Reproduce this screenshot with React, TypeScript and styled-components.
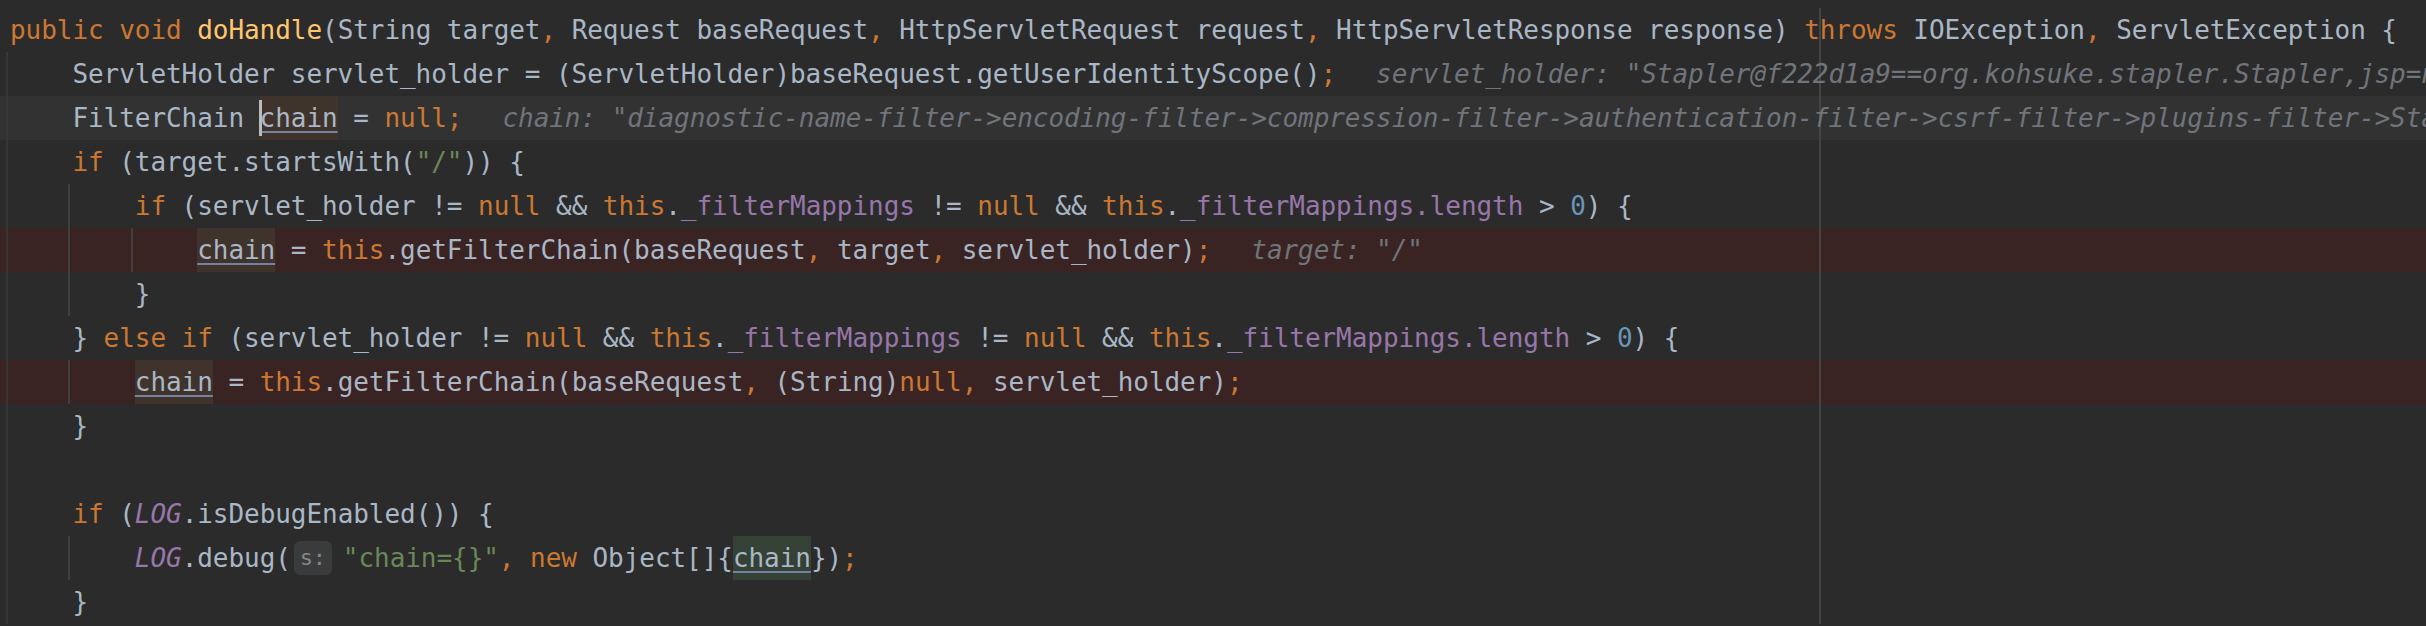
import React from "react";
import styled, { createGlobalStyle } from "styled-components";

const CHAR_W = 15.6;
const ORIGIN_X = 10;
const MARGIN_X = 1819;

const GlobalStyle = createGlobalStyle`
  html, body {
    margin: 0;
    padding: 0;
    background: #2b2b2b;
    overflow: hidden;
  }
`;

type Kind = "tx" | "kw" | "fn" | "st" | "nu" | "fi" | "sf";

const COLORS: Record<Kind, string> = {
  tx: "#a9b7c6",
  kw: "#cc7832",
  fn: "#ffc66d",
  st: "#6a8759",
  nu: "#6897bb",
  fi: "#9876aa",
  sf: "#9876aa",
};

type Part =
  | { type: "tok"; k: Kind; t: string }
  | { type: "ident"; access: "write" | "read"; t: string; caret?: boolean }
  | { type: "value"; t: string }
  | { type: "param"; t: string };

type LineData = {
  parts: Part[];
  guides: number[];
  bg?: "current" | "breakpoint";
};

const Editor = styled.div`
  width: 2426px;
  height: 626px;
  background: #2b2b2b;
  overflow: hidden;
  font-family: "DejaVu Sans Mono", "Liberation Mono", monospace;
  font-size: 26px;
  letter-spacing: -0.053px;
`;

const Code = styled.div`
  display: flex;
  flex-direction: column;
  padding-top: 8px;
`;

/* Vertical rules (indent guides and the right margin) are painted as
   background layers of each line, so they sit over the line colour. */
const rule = (x: number, color: string) => ({
  image: `linear-gradient(${color}, ${color})`,
  pos: `${x}px 0`,
});

const Line = styled.div<{ $bg?: "current" | "breakpoint"; $guides: number[] }>`
  display: flex;
  align-items: stretch;
  height: 44px;
  padding-left: ${ORIGIN_X}px;
  white-space: pre;
  line-height: 44px;
  ${(p) => {
    const rules = [
      rule(MARGIN_X, "#444444"),
      ...p.$guides.map((c) => rule(6 + c * CHAR_W, c === 0 ? "#363636" : "#3f3f3f")),
    ];
    return `
      background-color: ${
        p.$bg === "current" ? "#323232" : p.$bg === "breakpoint" ? "#3a2323" : "transparent"
      };
      background-image: ${rules.map((r) => r.image).join(", ")};
      background-position: ${rules.map((r) => r.pos).join(", ")};
      background-size: 2px 100%;
      background-repeat: no-repeat;
    `;
  }}
`;

const Tok = styled.span<{ $k: Kind }>`
  color: ${(p) => COLORS[p.$k]};
  font-style: ${(p) => (p.$k === "sf" ? "italic" : "normal")};
`;

const Ident = styled.span<{ $access: "write" | "read" }>`
  position: relative;
  color: #a9b7c6;
  background: ${(p) => (p.$access === "write" ? "#40332b" : "#344134")};
  text-decoration: underline;
  text-decoration-color: #7382a0;
  text-decoration-thickness: 2px;
  text-underline-offset: 4px;
`;

const Caret = styled.span`
  position: absolute;
  left: -1px;
  top: 4px;
  bottom: 4px;
  width: 3px;
  background: #bbbbbb;
`;

const InlineValue = styled.span`
  margin-left: 40px;
  color: #70747b;
  font-style: italic;
`;

const ParamHint = styled.span`
  align-self: center;
  display: flex;
  align-items: center;
  justify-content: center;
  width: 38px;
  height: 34px;
  margin: 0 11px 0 3px;
  border-radius: 6px;
  background: #3a3b3c;
  color: #878787;
  font-size: 22px;
  line-height: 34px;
`;

const t = (k: Kind, text: string): Part => ({ type: "tok", k, t: text });
const w = (text: string, caret = false): Part => ({ type: "ident", access: "write", t: text, caret });
const r = (text: string): Part => ({ type: "ident", access: "read", t: text });
const v = (text: string): Part => ({ type: "value", t: text });
const ph = (text: string): Part => ({ type: "param", t: text });

const condition = (lead: Part[]): Part[] => [
  ...lead,
  t("tx", " (servlet_holder != "),
  t("kw", "null"),
  t("tx", " && "),
  t("kw", "this"),
  t("tx", "."),
  t("fi", "_filterMappings"),
  t("tx", " != "),
  t("kw", "null"),
  t("tx", " && "),
  t("kw", "this"),
  t("tx", "."),
  t("fi", "_filterMappings.length"),
  t("tx", " > "),
  t("nu", "0"),
  t("tx", ") {"),
];

const LINES: LineData[] = [
  {
    guides: [],
    parts: [
      t("kw", "public void "),
      t("fn", "doHandle"),
      t("tx", "(String target"),
      t("kw", ","),
      t("tx", " Request baseRequest"),
      t("kw", ","),
      t("tx", " HttpServletRequest request"),
      t("kw", ","),
      t("tx", " HttpServletResponse response) "),
      t("kw", "throws"),
      t("tx", " IOException"),
      t("kw", ","),
      t("tx", " ServletException {"),
    ],
  },
  {
    guides: [0],
    parts: [
      t("tx", "    ServletHolder servlet_holder = (ServletHolder)baseRequest.getUserIdentityScope()"),
      t("kw", ";"),
      v('servlet_holder: "Stapler@f222d1a9==org.kohsuke.stapler.Stapler,jsp=null,order=-1,inst=true,async=true"'),
    ],
  },
  {
    guides: [0],
    bg: "current",
    parts: [
      t("tx", "    FilterChain "),
      w("chain", true),
      t("tx", " = "),
      t("kw", "null;"),
      v('chain: "diagnostic-name-filter->encoding-filter->compression-filter->authentication-filter->csrf-filter->plugins-filter->Stapler"'),
    ],
  },
  {
    guides: [0],
    parts: [t("tx", "    "), t("kw", "if"), t("tx", " (target.startsWith("), t("st", '"/"'), t("tx", ")) {")],
  },
  {
    guides: [0, 4],
    parts: condition([t("tx", "        "), t("kw", "if")]),
  },
  {
    guides: [0, 4, 8],
    bg: "breakpoint",
    parts: [
      t("tx", "            "),
      w("chain"),
      t("tx", " = "),
      t("kw", "this"),
      t("tx", ".getFilterChain(baseRequest"),
      t("kw", ","),
      t("tx", " target"),
      t("kw", ","),
      t("tx", " servlet_holder)"),
      t("kw", ";"),
      v('target: "/"'),
    ],
  },
  { guides: [0, 4], parts: [t("tx", "        }")] },
  {
    guides: [0],
    parts: condition([t("tx", "    } "), t("kw", "else if")]),
  },
  {
    guides: [0, 4],
    bg: "breakpoint",
    parts: [
      t("tx", "        "),
      w("chain"),
      t("tx", " = "),
      t("kw", "this"),
      t("tx", ".getFilterChain(baseRequest"),
      t("kw", ","),
      t("tx", " (String)"),
      t("kw", "null"),
      t("kw", ","),
      t("tx", " servlet_holder)"),
      t("kw", ";"),
    ],
  },
  { guides: [0], parts: [t("tx", "    }")] },
  { guides: [0], parts: [] },
  {
    guides: [0],
    parts: [t("tx", "    "), t("kw", "if"), t("tx", " ("), t("sf", "LOG"), t("tx", ".isDebugEnabled()) {")],
  },
  {
    guides: [0, 4],
    parts: [
      t("tx", "        "),
      t("sf", "LOG"),
      t("tx", ".debug("),
      ph("s:"),
      t("st", '"chain={}"'),
      t("kw", ","),
      t("tx", " "),
      t("kw", "new"),
      t("tx", " Object[]{"),
      r("chain"),
      t("tx", "})"),
      t("kw", ";"),
    ],
  },
  { guides: [0], parts: [t("tx", "    }")] },
];

function renderPart(p: Part, i: number) {
  switch (p.type) {
    case "tok":
      return (
        <Tok key={i} $k={p.k}>
          {p.t}
        </Tok>
      );
    case "ident":
      return (
        <Ident key={i} $access={p.access}>
          {p.caret && <Caret />}
          {p.t}
        </Ident>
      );
    case "value":
      return <InlineValue key={i}>{p.t}</InlineValue>;
    case "param":
      return <ParamHint key={i}>{p.t}</ParamHint>;
  }
}

export default function App() {
  return (
    <>
      <GlobalStyle />
      <Editor>
        <Code>
          {LINES.map((line, li) => (
            <Line key={li} $bg={line.bg} $guides={line.guides}>
              {line.parts.map(renderPart)}
            </Line>
          ))}
        </Code>
      </Editor>
    </>
  );
}
